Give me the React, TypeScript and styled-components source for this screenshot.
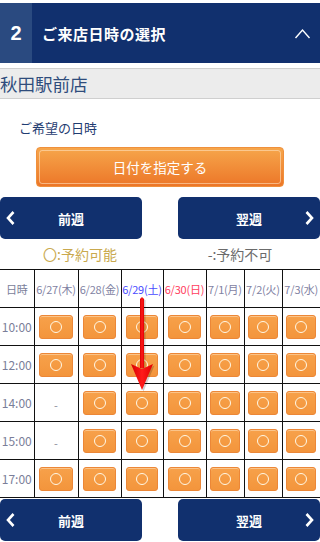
import React from "react";
import styled, { createGlobalStyle } from "styled-components";

const Global = createGlobalStyle`
  html, body { margin: 0; padding: 0; background: #fff; }
  body { font-family: "Noto Sans CJK JP", "Noto Sans", sans-serif; width: 320px; overflow: hidden; }
  * { box-sizing: border-box; }
`;

const Page = styled.div`
  padding-top: 3px;
  width: 320px;
`;

const Header = styled.div`
  display: flex;
  align-items: center;
  height: 60px;
  background: #11306e;
  color: #fff;
`;

const StepNo = styled.div`
  width: 32px;
  height: 100%;
  background: #2a4a80;
  display: flex;
  align-items: center;
  justify-content: center;
  font-family: "Liberation Sans", "Noto Sans", sans-serif;
  font-weight: 700;
  font-size: 20px;
`;

const Title = styled.div`
  flex: 1;
  padding-left: 10px;
  font-weight: 700;
  font-size: 15px;
  letter-spacing: 0.5px;
`;

const Toggle = styled.svg`
  width: 18px;
  height: 12px;
  margin-right: 8px;
  margin-top: 2px;
`;

const StoreRow = styled.div`
  margin-top: 5px;
  height: 31px;
  background: #ececec;
  border-top: 1px solid #cfcfcf;
  border-bottom: 1px solid #cfcfcf;
  display: flex;
  align-items: center;
  font-size: 17.5px;
  color: #2f4c7c;
  padding-bottom: 1px;
`;

const Label = styled.div`
  margin-top: 20px;
  padding-left: 19px;
  font-size: 13px;
  line-height: 18px;
  color: #1f3c71;
`;

const DateButton = styled.button`
  position: relative;
  display: flex;
  align-items: center;
  justify-content: center;
  width: 248px;
  height: 40px;
  margin: 10px auto 0;
  border: 1px solid #f0903c;
  border-radius: 4px;
  background: linear-gradient(#f6a64b, #ec7628);
  color: #fff;
  font-family: inherit;
  font-size: 13.5px;
  padding: 0;
  &::after {
    content: "";
    position: absolute;
    inset: 2px;
    border: 1px solid rgba(255, 225, 190, 0.6);
    border-radius: 3px;
  }
`;

const WeekNav = styled.div<{ $top: number }>`
  display: flex;
  justify-content: space-between;
  margin-top: ${(p) => p.$top}px;
`;

const WeekButton = styled.button`
  display: grid;
  grid-template-columns: 22px 1fr 22px;
  align-items: center;
  justify-items: center;
  width: 142px;
  height: 42px;
  padding: 0;
  border: none;
  border-radius: 5px;
  background: #11306e;
  color: #fff;
  font-family: inherit;
  font-weight: 700;
  font-size: 13px;
`;

const Chevron = styled.svg`
  width: 10px;
  height: 16px;
`;

const Legend = styled.div`
  display: grid;
  grid-template-columns: 1fr 1fr;
  height: 30px;
  align-items: center;
  font-size: 14px;
`;

const LegendItem = styled.div<{ $color: string }>`
  text-align: center;
  color: ${(p) => p.$color};
`;

const TableWrap = styled.div`
  position: relative;
`;

const Table = styled.table`
  width: 320px;
  border-collapse: collapse;
  table-layout: fixed;
`;

const Row = styled.tr`
  height: 38px;
`;

const Cell = styled.td`
  border: 1px solid #111;
  padding: 0;
  text-align: center;
  vertical-align: middle;
  &:first-child { border-left: none; }
  &:last-child { border-right: none; }
`;

const HeadCell = styled(Cell)<{ $color: string }>`
  font-size: 11px;
  color: ${(p) => p.$color};
  white-space: nowrap;
  letter-spacing: -0.2px;
`;

const TimeCell = styled(Cell)`
  font-size: 12px;
  color: #7a7e99;
`;

const DashText = styled.span`
  font-size: 11px;
  color: #8a8a9a;
`;

const Slot = styled.button`
  display: flex;
  align-items: center;
  justify-content: center;
  width: 80%;
  height: 24px;
  margin: 0 auto;
  padding: 0;
  border: 1px solid #ec8737;
  border-radius: 3px;
  background: linear-gradient(#f7a14a, #f3953c);
  box-shadow: inset 0 1px 0 #fbc489;
`;

const Ring = styled.span`
  width: 12px;
  height: 12px;
  border: 1.3px solid #fff8e6;
  border-radius: 50%;
`;

const Arrow = styled.svg`
  position: absolute;
  left: 128px;
  top: 27px;
  width: 28px;
  height: 98px;
  pointer-events: none;
`;

const dates = [
  { t: "6/27(木)", c: "#7f82a3" },
  { t: "6/28(金)", c: "#7f82a3" },
  { t: "6/29(土)", c: "#4a4cff" },
  { t: "6/30(日)", c: "#ff3d5e" },
  { t: "7/1(月)", c: "#7f82a3" },
  { t: "7/2(火)", c: "#7f82a3" },
  { t: "7/3(水)", c: "#7f82a3" },
];
const widths = [34, 44, 43, 42, 43, 38, 38, 38];
const times = ["10:00", "12:00", "14:00", "15:00", "17:00"];
const unavailable: Record<string, number[]> = { "14:00": [0], "15:00": [0] };

function Nav({ top }: { top: number }) {
  return (
    <WeekNav $top={top}>
      <WeekButton>
        <Chevron viewBox="0 0 10 16">
          <polyline points="7.5,2 2,8 7.5,14" fill="none" stroke="#fff" strokeWidth="2.6" />
        </Chevron>
        <span>前週</span>
        <span />
      </WeekButton>
      <WeekButton>
        <span />
        <span>翌週</span>
        <Chevron viewBox="0 0 10 16">
          <polyline points="2.5,2 8,8 2.5,14" fill="none" stroke="#fff" strokeWidth="2.6" />
        </Chevron>
      </WeekButton>
    </WeekNav>
  );
}

export default function App() {
  return (
    <Page>
      <Global />
      <Header>
        <StepNo>2</StepNo>
        <Title>ご来店日時の選択</Title>
        <Toggle viewBox="0 0 18 12">
          <polyline points="1.5,10 8.5,2 15.5,10" fill="none" stroke="#fff" strokeWidth="1.4" />
        </Toggle>
      </Header>
      <StoreRow>秋田駅前店</StoreRow>
      <Label>ご希望の日時</Label>
      <DateButton>日付を指定する</DateButton>
      <Nav top={10} />
      <Legend>
        <LegendItem $color="#c9a94e">〇:予約可能</LegendItem>
        <LegendItem $color="#6b6b6b">-:予約不可</LegendItem>
      </Legend>
      <TableWrap>
        <Table>
          <colgroup>
            {widths.map((w, i) => (
              <col key={i} style={{ width: w }} />
            ))}
          </colgroup>
          <tbody>
            <Row>
              <HeadCell $color="#7a7e99">日時</HeadCell>
              {dates.map((d) => (
                <HeadCell key={d.t} $color={d.c}>
                  {d.t}
                </HeadCell>
              ))}
            </Row>
            {times.map((t) => (
              <Row key={t}>
                <TimeCell>{t}</TimeCell>
                {dates.map((d, i) => (
                  <Cell key={d.t}>
                    {unavailable[t]?.includes(i) ? (
                      <DashText>-</DashText>
                    ) : (
                      <Slot>
                        <Ring />
                      </Slot>
                    )}
                  </Cell>
                ))}
              </Row>
            ))}
          </tbody>
        </Table>
        <Arrow viewBox="0 0 28 98">
          <defs>
            <linearGradient id="ar" x1="0" x2="1" y1="0" y2="0">
              <stop offset="0" stopColor="#d60000" />
              <stop offset="0.5" stopColor="#ff1a1a" />
              <stop offset="1" stopColor="#e00000" />
            </linearGradient>
          </defs>
          <g fill="rgba(0,0,0,0.18)" transform="translate(1.5,1.5)">
            <path d="M12 3 L14 1 L16 3 L16 72 L12 72 Z" />
            <polygon points="14,94 3,68 14,73 25,68" />
          </g>
          <g fill="url(#ar)">
            <path d="M12 3 L14 1 L16 3 L16 72 L12 72 Z" />
            <polygon points="14,94 3,68 14,73 25,68" />
          </g>
        </Arrow>
      </TableWrap>
      <Nav top={1} />
    </Page>
  );
}
